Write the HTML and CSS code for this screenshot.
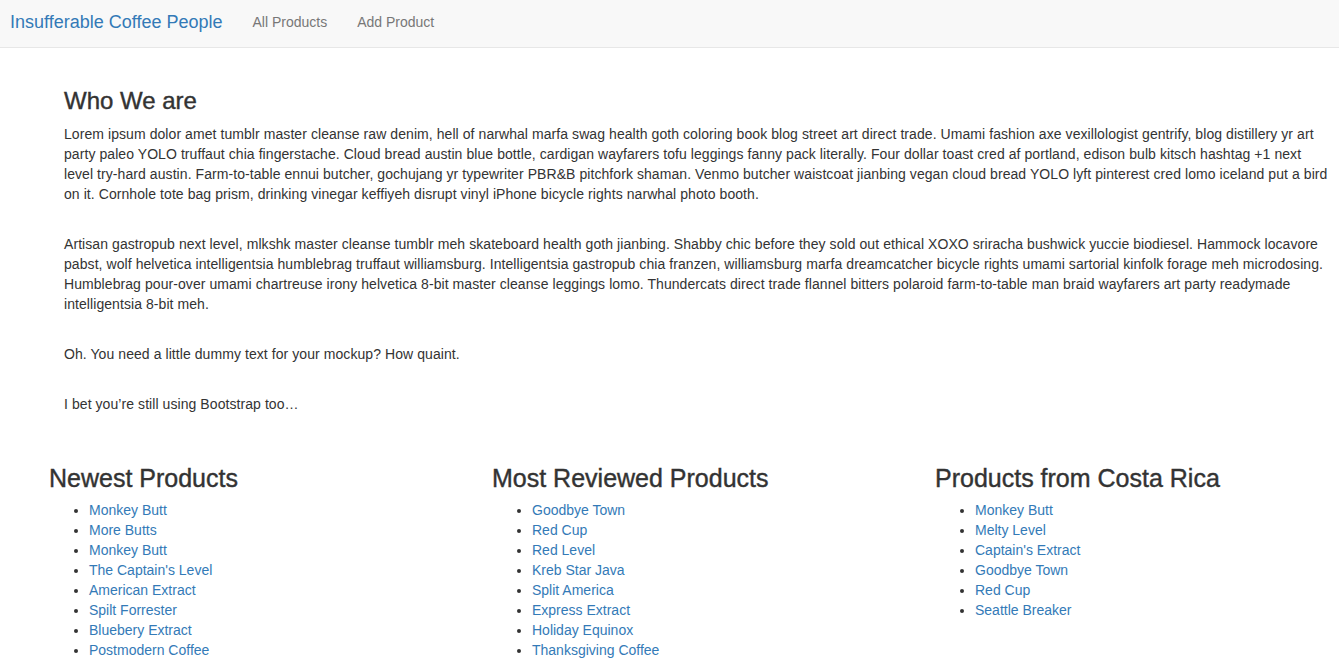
FILE: index.html
```html
<!DOCTYPE html>
<html lang="en">
<head>
<meta charset="utf-8">
<title>Insufferable Coffee People</title>
<link rel="stylesheet" href="styles.css">
</head>
<body>
<nav class="navbar">
  <a class="brand" href="#">Insufferable Coffee People</a>
  <a class="nav-link" href="#">All Products</a>
  <a class="nav-link" href="#">Add Product</a>
</nav>
<main>
  <section class="about">
    <h3 class="about-title">Who We are</h3>
    <p>Lorem ipsum dolor amet tumblr master cleanse raw denim, hell of narwhal marfa swag health goth coloring book blog street art direct trade. Umami fashion axe vexillologist gentrify, blog distillery yr art party paleo YOLO truffaut chia fingerstache. Cloud bread austin blue bottle, cardigan wayfarers tofu leggings fanny pack literally. Four dollar toast cred af portland, edison bulb kitsch hashtag +1 next level try-hard austin. Farm-to-table ennui butcher, gochujang yr typewriter PBR&amp;B pitchfork shaman. Venmo butcher waistcoat jianbing vegan cloud bread YOLO lyft pinterest cred lomo iceland put a bird on it. Cornhole tote bag prism, drinking vinegar keffiyeh disrupt vinyl iPhone bicycle rights narwhal photo booth.</p>
    <p>Artisan gastropub next level, mlkshk master cleanse tumblr meh skateboard health goth jianbing. Shabby chic before they sold out ethical XOXO sriracha bushwick yuccie biodiesel. Hammock locavore pabst, wolf helvetica intelligentsia humblebrag truffaut williamsburg. Intelligentsia gastropub chia franzen, williamsburg marfa dreamcatcher bicycle rights umami sartorial kinfolk forage meh microdosing. Humblebrag pour-over umami chartreuse irony helvetica 8-bit master cleanse leggings lomo. Thundercats direct trade flannel bitters polaroid farm-to-table man braid wayfarers art party readymade intelligentsia 8-bit meh.</p>
    <p>Oh. You need a little dummy text for your mockup? How quaint.</p>
    <p>I bet you’re still using Bootstrap too…</p>
  </section>
  <section class="products">
    <div class="product-col">
      <h2 class="col-title">Newest Products</h2>
      <ul class="product-list">
        <li><a href="#">Monkey Butt</a></li>
        <li><a href="#">More Butts</a></li>
        <li><a href="#">Monkey Butt</a></li>
        <li><a href="#">The Captain's Level</a></li>
        <li><a href="#">American Extract</a></li>
        <li><a href="#">Spilt Forrester</a></li>
        <li><a href="#">Bluebery Extract</a></li>
        <li><a href="#">Postmodern Coffee</a></li>
      </ul>
    </div>
    <div class="product-col">
      <h2 class="col-title">Most Reviewed Products</h2>
      <ul class="product-list">
        <li><a href="#">Goodbye Town</a></li>
        <li><a href="#">Red Cup</a></li>
        <li><a href="#">Red Level</a></li>
        <li><a href="#">Kreb Star Java</a></li>
        <li><a href="#">Split America</a></li>
        <li><a href="#">Express Extract</a></li>
        <li><a href="#">Holiday Equinox</a></li>
        <li><a href="#">Thanksgiving Coffee</a></li>
      </ul>
    </div>
    <div class="product-col">
      <h2 class="col-title">Products from Costa Rica</h2>
      <ul class="product-list">
        <li><a href="#">Monkey Butt</a></li>
        <li><a href="#">Melty Level</a></li>
        <li><a href="#">Captain's Extract</a></li>
        <li><a href="#">Goodbye Town</a></li>
        <li><a href="#">Red Cup</a></li>
        <li><a href="#">Seattle Breaker</a></li>
      </ul>
    </div>
  </section>
</main>
</body>
</html>
```

FILE: styles.css
```css
* { box-sizing: border-box; }

html, body {
  margin: 0;
  padding: 0;
}

body {
  font-family: "Liberation Sans", Arial, Helvetica, sans-serif;
  font-size: 14px;
  line-height: 20px;
  color: #333;
  background: #fff;
  overflow-x: hidden;
}

a {
  color: #337ab7;
  text-decoration: none;
}

.navbar {
  display: flex;
  align-items: center;
  height: 48px;
  padding: 0 0 4px 10px;
  background: #f8f8f8;
  border-bottom: 1px solid #e7e7e7;
}

.brand {
  font-size: 18px;
  line-height: 20px;
  color: #337ab7;
  padding-right: 15px;
}

.nav-link {
  color: #777;
  font-size: 14px;
  padding: 0 15px;
}

.about {
  padding: 40px 5px 0 64px;
}

.about-title {
  font-size: 24px;
  line-height: 1.1;
  font-weight: 500;
  margin: 0 0 10px;
  -webkit-text-stroke: 0.4px #333;
}

.about p {
  margin: 0 0 30px;
  letter-spacing: 0.07px;
}

.products {
  display: grid;
  grid-template-columns: 443px 443px 1fr;
  padding-left: 49px;
  margin-top: 51px;
}

.col-title {
  font-size: 25px;
  line-height: 1.1;
  font-weight: 500;
  margin: 0 0 7px;
  -webkit-text-stroke: 0.4px #333;
}

.product-list {
  margin: 0;
  padding-left: 40px;
}

.product-list li {
  line-height: 20px;
}
```
